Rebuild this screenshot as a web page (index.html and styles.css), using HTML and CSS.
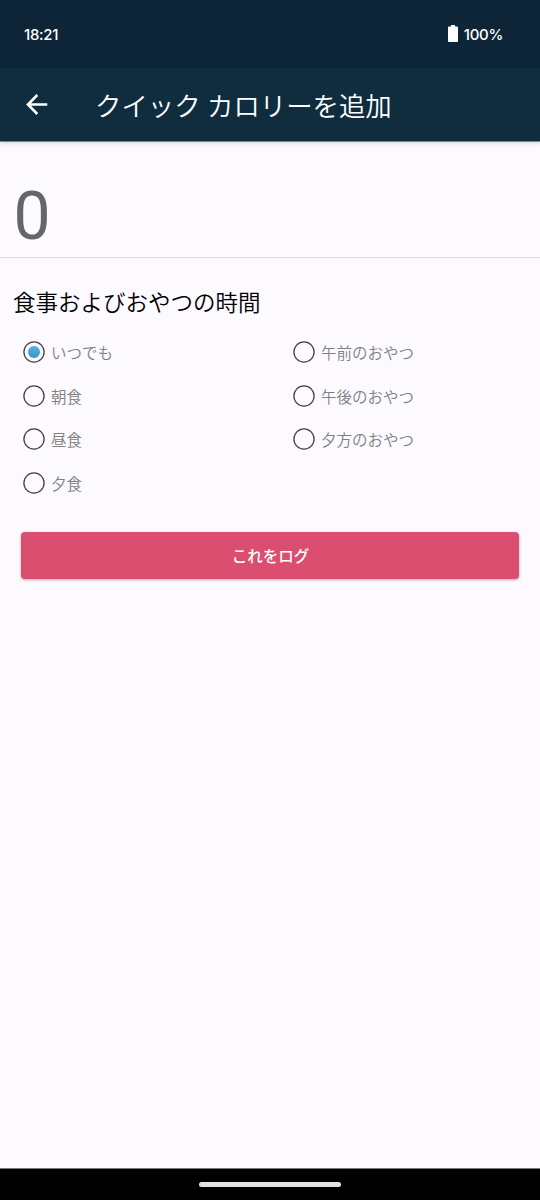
FILE: index.html
```html
<!DOCTYPE html>
<html lang="ja">
<head>
<meta charset="utf-8">
<title>クイック カロリーを追加</title>
<link rel="stylesheet" href="styles.css">
</head>
<body>
<div class="screen">
  <div class="status">
    <span class="clock">18:21</span>
    <span class="battery">
      <svg class="cell" width="10" height="17" viewBox="0 0 10 17"><path d="M3 0h4v1.500h2q1 0 1 1V16q0 1-1 1H1q-1 0-1-1V2.500q0-1 1-1h2z" fill="#fff"/></svg>
      <span class="percent">100%</span>
    </span>
  </div>
  <header class="appbar">
    <svg class="back" width="22" height="21" viewBox="0 0 22 21"><path d="M11.300 1L1.900 10.500L11.300 20M2 10.500H21.300" fill="none" stroke="#fff" stroke-width="2.500"/></svg>
    <h1 class="title">クイック カロリーを追加</h1>
  </header>
  <main class="content">
    <div class="amount">0</div>
    <h2 class="heading">食事およびおやつの時間</h2>
    <div class="options">
      <div class="column">
        <label class="option"><svg class="radio" viewBox="0 0 22 22"><defs><linearGradient id="dot" x2="0" y2="1"><stop stop-color="#55b0df"/><stop offset="1" stop-color="#3c93c6"/></linearGradient></defs><circle class="ring" cx="11" cy="11" r="10.100"/><circle cx="11" cy="11" r="6" fill="url(#dot)"/></svg><span class="label">いつでも</span></label>
        <label class="option"><svg class="radio" viewBox="0 0 22 22"><circle class="ring" cx="11" cy="11" r="10.100"/></svg><span class="label">朝食</span></label>
        <label class="option"><svg class="radio" viewBox="0 0 22 22"><circle class="ring" cx="11" cy="11" r="10.100"/></svg><span class="label">昼食</span></label>
        <label class="option"><svg class="radio" viewBox="0 0 22 22"><circle class="ring" cx="11" cy="11" r="10.100"/></svg><span class="label">夕食</span></label>
      </div>
      <div class="column">
        <label class="option"><svg class="radio" viewBox="0 0 22 22"><circle class="ring" cx="11" cy="11" r="10.100"/></svg><span class="label">午前のおやつ</span></label>
        <label class="option"><svg class="radio" viewBox="0 0 22 22"><circle class="ring" cx="11" cy="11" r="10.100"/></svg><span class="label">午後のおやつ</span></label>
        <label class="option"><svg class="radio" viewBox="0 0 22 22"><circle class="ring" cx="11" cy="11" r="10.100"/></svg><span class="label">夕方のおやつ</span></label>
      </div>
    </div>
    <button class="submit">これをログ</button>
  </main>
  <nav class="navbar"><span class="handle"></span></nav>
</div>
</body>
</html>
```
FILE: styles.css
```css
* { box-sizing: border-box; }
body { margin: 0; font-family: Roboto, "Noto Sans CJK JP", sans-serif; }
.screen { width: 540px; height: 1200px; display: flex; flex-direction: column; background: #fcfafe; }
.status { height: 68px; flex: none; display: flex; justify-content: space-between; align-items: center; padding: 0 37px 0 24px; background: #0d2537; color: #fff; font: 500 15px/20px Inter, sans-serif; letter-spacing: -0.3px; }
.clock { padding-top: 1px; }
.battery { display: flex; align-items: center; gap: 6px; }
.cell { margin-top: -1px; }
.percent { padding-top: 1px; }
.appbar { height: 73px; flex: none; display: flex; align-items: center; padding-left: 26px; background: #102d3f; color: #fff; box-shadow: 0 1px 0 rgba(16,45,63,.5), 0 2px 5px rgba(0,0,0,.16); }
.back { flex: none; }
.title { margin: 4px 0 0 47px; font-size: 26.400px; line-height: 36px; font-weight: 350; white-space: nowrap; }
.content { flex: 1; }
.amount { height: 117px; padding: 37px 0 0 13.400px; border-bottom: 1px solid #dcdadf; font-size: 66px; line-height: 78px; color: #666; }
.heading { margin: 29px 0 0 13px; font-size: 22.500px; line-height: 32px; font-weight: 350; color: #000; }
.options { display: grid; grid-template-columns: 1fr 1fr; margin-top: 11.300px; }
.column { padding-left: 23px; }
.option { display: flex; align-items: center; gap: 6px; height: 43.500px; font-size: 15.500px; line-height: 22px; font-weight: 350; color: #808080; }
.label { padding-top: 4px; }
.radio { width: 22px; height: 22px; flex: none; }
.ring { fill: none; stroke: #444246; stroke-width: 1.300px; }
.submit { display: block; width: 498px; height: 47px; margin: 27.700px 0 0 21px; padding: 4px 0 0 1px; border: 0; border-radius: 4px; background: #db4e70; color: #fff; font: 500 15.500px/22px Roboto, "Noto Sans CJK JP", sans-serif; box-shadow: 0 1px 3px rgba(0,0,0,.3); }
.navbar { height: 32px; flex: none; display: flex; justify-content: center; align-items: center; border-top: 1px solid #7c7b7e; background: #000; }
.handle { width: 142px; height: 5px; border-radius: 3px; background: #e2e2e2; }
```
